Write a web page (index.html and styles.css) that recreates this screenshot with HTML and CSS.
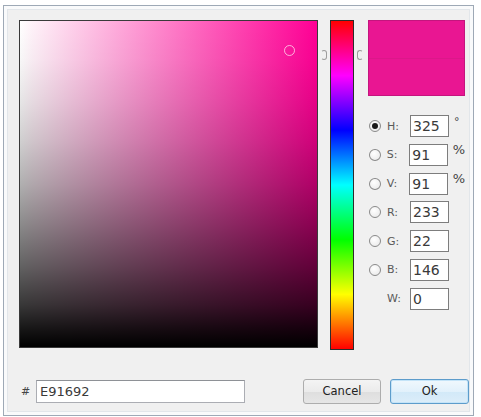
FILE: index.html
```html
<!DOCTYPE html>
<html>
<head>
<meta charset="utf-8">
<link rel="stylesheet" href="styles.css">
</head>
<body>
<div class="dialog">
  <div class="main">
    <div class="square">
      <span class="picker"></span>
    </div>
    <div class="huewrap">
      <span class="mark mark-left"></span>
      <div class="huebar"></div>
      <span class="mark mark-right"></span>
    </div>
    <div class="side">
      <div class="preview">
        <div class="half"></div>
        <div class="half"></div>
      </div>
      <div class="fields">
        <div class="row"><span class="radio checked"></span><span class="lbl">H:</span><span class="box">325</span><span class="unit deg">°</span></div>
        <div class="row"><span class="radio"></span><span class="lbl">S:</span><span class="box">91</span><span class="unit">%</span></div>
        <div class="row"><span class="radio"></span><span class="lbl">V:</span><span class="box">91</span><span class="unit">%</span></div>
        <div class="row"><span class="radio"></span><span class="lbl">R:</span><span class="box">233</span></div>
        <div class="row"><span class="radio"></span><span class="lbl">G:</span><span class="box">22</span></div>
        <div class="row"><span class="radio"></span><span class="lbl">B:</span><span class="box">146</span></div>
        <div class="row"><span class="radio blank"></span><span class="lbl">W:</span><span class="box">0</span></div>
      </div>
    </div>
  </div>
  <div class="bottom">
    <span class="hash">#</span>
    <span class="hex">E91692</span>
    <span class="btn cancel">Cancel</span>
    <span class="btn ok">Ok</span>
  </div>
</div>
</body>
</html>
```

FILE: styles.css
```css
html, body {
  margin: 0;
  padding: 0;
  background: #ffffff;
}

.dialog {
  box-sizing: border-box;
  margin: 5px 0 0 3px;
  width: 471px;
  height: 411px;
  border: 1px solid #9ea9b6;
  background: #f0f0f0;
  box-shadow: inset 0 0 0 3px #f9fafb, inset 0 0 0 4px #e2e6ea;
  padding: 14px 0 0 15px;
  display: flex;
  flex-direction: column;
  font-family: "DejaVu Sans", sans-serif;
  color: #333;
}

.main {
  display: flex;
  align-items: flex-start;
}

.square {
  position: relative;
  box-sizing: border-box;
  width: 299px;
  height: 328px;
  border: 1px solid #3a3a3a;
  background:
    linear-gradient(to bottom,
      rgba(0,0,0,0) 0%,
      rgba(0,0,0,0.03) 12%,
      rgba(0,0,0,0.1) 25%,
      rgba(0,0,0,0.19) 37%,
      rgba(0,0,0,0.31) 50%,
      rgba(0,0,0,0.45) 62%,
      rgba(0,0,0,0.61) 75%,
      rgba(0,0,0,0.78) 87%,
      rgba(0,0,0,0.92) 95%,
      #000 100%),
    linear-gradient(to right, #ffffff 0%, #fff2f9 4%, #ff0095 100%);
}

.picker {
  position: absolute;
  left: 264px;
  top: 24px;
  width: 9px;
  height: 9px;
  border: 1px solid rgba(255, 225, 240, 0.75);
  border-radius: 50%;
}

.huewrap {
  position: relative;
  width: 47px;
  height: 330px;
  margin-left: 1px;
  display: flex;
  justify-content: center;
}

.huebar {
  box-sizing: border-box;
  width: 24px;
  height: 330px;
  margin-left: -1px;
  border: 1px solid #2c2c2c;
  background: linear-gradient(to bottom,
    #ff0000 0%,
    #ff00ff 16.67%,
    #0000ff 33.33%,
    #00ffff 50%,
    #00ff00 66.67%,
    #ffff00 83.33%,
    #ff0000 100%);
}

.mark {
  position: absolute;
  top: 30px;
  width: 4px;
  height: 8px;
  border: 1px solid #9c9c9c;
  border-radius: 3px;
}

.mark-left {
  left: 2px;
  border-left-color: transparent;
}

.mark-right {
  right: 3px;
  border-right-color: transparent;
}

.side {
  width: 97px;
  margin-left: 2px;
  display: flex;
  flex-direction: column;
}

.preview {
  box-sizing: border-box;
  height: 76px;
  border: 1px solid #c4157e;
  display: flex;
  flex-direction: column;
}

.half {
  flex: 1;
  background: #e91692;
}

.half + .half {
  border-top: 1px solid #dc1889;
}

.fields {
  margin-top: 19px;
  display: flex;
  flex-direction: column;
  gap: 6.8px;
}

.row {
  height: 22px;
  display: flex;
  align-items: center;
}

.radio {
  box-sizing: border-box;
  width: 12px;
  height: 12px;
  margin-left: 1px;
  border: 1px solid #8a8a8a;
  border-radius: 50%;
  background: radial-gradient(circle at 40% 35%, #ffffff, #e6e6e6);
  display: flex;
  align-items: center;
  justify-content: center;
}

.radio.checked::after {
  content: "";
  width: 6px;
  height: 6px;
  border-radius: 50%;
  background: #1a1a1a;
}

.radio.blank {
  visibility: hidden;
}

.lbl {
  width: 23px;
  margin-left: 6px;
  font-size: 11px;
  color: #5a5a5a;
}

.box {
  box-sizing: border-box;
  width: 39px;
  height: 22px;
  border: 1px solid #7d7d7d;
  background: #ffffff;
  font-size: 14px;
  line-height: 20px;
  padding-left: 2px;
  color: #3a3a3a;
}

.unit {
  margin-left: 5px;
  font-size: 13px;
  color: #444;
  align-self: flex-start;
  margin-top: -2px;
}

.unit.deg {
  font-size: 11px;
  margin-top: 0;
}

.bottom {
  margin-top: 29px;
  display: flex;
  align-items: center;
}

.hash {
  width: 15px;
  padding-left: 2px;
  font-size: 11px;
  color: #444;
}

.hex {
  box-sizing: border-box;
  width: 209px;
  height: 23px;
  border: 1px solid #abadb3;
  border-top-color: #8e9196;
  background: #ffffff;
  font-size: 13px;
  line-height: 21px;
  padding-left: 3px;
  color: #3a3a3a;
}

.btn {
  box-sizing: border-box;
  height: 25px;
  border-radius: 3px;
  font-size: 11.5px;
  line-height: 23px;
  text-align: center;
  color: #222;
}

.cancel {
  width: 78px;
  margin-left: 58px;
  border: 1px solid #adadad;
  background: linear-gradient(to bottom, #f4f4f4 0%, #ebebeb 50%, #dedede 51%, #e6e6e6 100%);
}

.ok {
  width: 79px;
  margin-left: 9px;
  border: 1px solid #5d9ccb;
  background: linear-gradient(to bottom, #f0f8fd 0%, #e2f1fb 50%, #d2e9f8 51%, #dcedf9 100%);
  box-shadow: inset 0 0 0 1px #c4e4f8;
}
```
